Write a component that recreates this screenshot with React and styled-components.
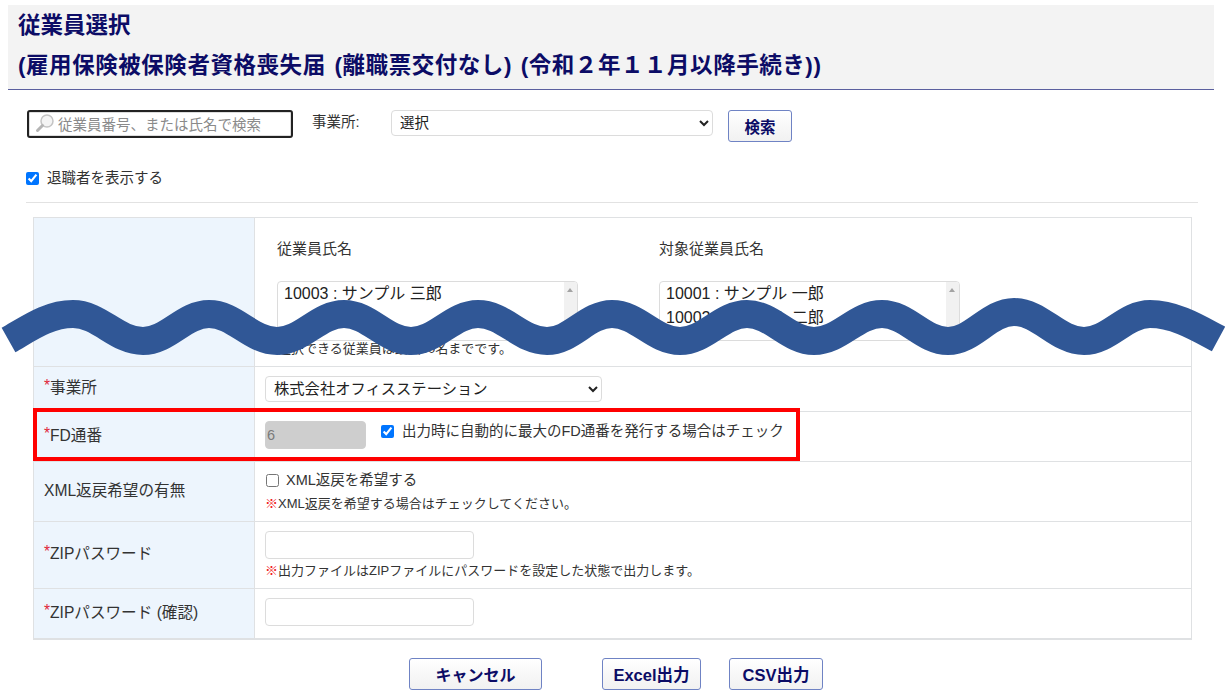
import React from "react";
import styled, { createGlobalStyle } from "styled-components";

const Global = createGlobalStyle`
  html, body { margin: 0; padding: 0; background: #fff; }
  body { font-family: "Liberation Sans", "Noto Sans CJK JP", sans-serif; font-size: 14.5px; color: #333; }
`;

const Page = styled.div`
  position: relative;
  width: 1225px;
  height: 700px;
  overflow: hidden;
  padding-top: 5px;
  box-sizing: border-box;
`;

const Header = styled.header`
  margin: 0 11px 0 8px;
  background: #f3f3f3;
  border-bottom: 1px solid #5a5f9e;
  padding: 8px 0 0 10px;
  height: 76px;
`;

const Title = styled.h1`
  margin: 0;
  font-size: 22.5px;
  line-height: 26px;
  font-weight: 700;
  color: #0c0c66;
  white-space: nowrap;
  letter-spacing: ${(p) => (p.$wide ? "0.55px" : "0")};
  word-spacing: ${(p) => (p.$wide ? "2px" : "0")};
  & + & { margin-top: 14px; }
`;

const Toolbar = styled.div`
  display: flex;
  align-items: flex-start;
  margin: 20px 0 0 27px;
`;

const SearchBox = styled.div`
  display: flex;
  align-items: center;
  gap: 3px;
  width: 266px;
  height: 28px;
  box-sizing: border-box;
  padding: 0 0 2px 6px;
  border: 2px solid #222;
  border-radius: 3px;
  background: #fff;
  box-shadow: inset 0 0 0 1px #ddd;
  color: #8a8a8a;
  white-space: nowrap;
`;

const ToolLabel = styled.span`
  margin: 2px 30px 0 19px;
  line-height: 20px;
  width: 49px;
  white-space: nowrap;
`;

const Select = styled.select`
  width: ${(p) => p.$width}px;
  height: ${(p) => p.$height}px;
  box-sizing: border-box;
  padding: 0 4px;
  border: 1px solid #dcdcdc;
  border-radius: 4px;
  background: #fff;
  color: #222;
  font: inherit;
  font-size: ${(p) => p.$fs}px;
`;

const Button = styled.button`
  width: ${(p) => p.$width}px;
  height: 32px;
  box-sizing: border-box;
  padding: 0;
  border: 1.5px solid #6f83c4;
  border-radius: 3px;
  background: linear-gradient(#ffffff, #f1f1f1);
  color: #0c0c66;
  font: inherit;
  font-size: ${(p) => p.$fs}px;
  font-weight: 700;
`;

const SearchButton = styled(Button)`
  margin-left: 15px;
`;

const RetiredRow = styled.label`
  display: flex;
  align-items: center;
  gap: 9px;
  margin: 24px 0 0 26px;
  height: 24px;
  line-height: 24px;
`;

const Check = styled.input.attrs({ type: "checkbox" })`
  width: 13px;
  height: 13px;
  margin: 0 -1px 0 0;
  flex: none;
  accent-color: #0075ff;
`;

const Rule = styled.hr`
  margin: 12px 27px 0 26px;
  border: 0;
  border-top: 1px solid #e2e2e2;
`;

const Table = styled.div`
  margin: 14px 33px 0 33px;
  width: 1159px;
  box-sizing: border-box;
  border: 1px solid #dfe1e3;
  border-bottom-width: 2px;
`;

const Row = styled.div`
  display: grid;
  grid-template-columns: 221px 1fr;
  min-height: ${(p) => p.$h}px;
  & + & { border-top: 1px solid #dfe1e3; }
`;

const Head = styled.div`
  display: flex;
  align-items: center;
  padding: 0 0 6px 10px;
  background: #edf5fd;
  border-right: 1px solid #dfe1e3;
  font-size: 15.6px;
`;

const Star = styled.span`
  color: #e0263a;
`;

const Cell = styled.div`
  display: flex;
  align-items: center;
  padding: 0 0 ${(p) => p.$pb || 0}px 10px;
`;

const ColCell = styled.div`
  display: flex;
  flex-direction: column;
  align-items: flex-start;
  justify-content: center;
  padding-left: 10px;
`;

const PickerCell = styled.div`
  display: flex;
  flex-direction: column;
`;

const Pickers = styled.div`
  display: flex;
  gap: 81px;
  padding: 21px 0 0 22px;
`;

const Picker = styled.div`
  width: 301px;
`;

const PickerLabel = styled.div`
  font-size: 15px;
  line-height: 20px;
  margin-bottom: 22px;
`;

const ListBox = styled.div`
  position: relative;
  height: 60px;
  box-sizing: border-box;
  padding: 0 6px;
  border: 1px solid #dcdcdc;
  border-radius: 4px;
  background: #fff;
  color: #222;
  font-size: 16px;
  line-height: 24px;
  overflow: hidden;
`;

const Track = styled.div`
  position: absolute;
  top: 0;
  right: 0;
  bottom: 0;
  width: 13px;
  background: #f1f1f1;
  &::before {
    content: "";
    position: absolute;
    top: 6px;
    left: 3px;
    border: 3.5px solid transparent;
    border-top: 0;
    border-bottom: 4px solid #a3a3a3;
  }
`;

const Note = styled.div`
  font-size: 13px;
  line-height: 18px;
  color: #333;
  margin-top: ${(p) => p.$mt || 0}px;
  white-space: nowrap;
`;

const PickerNote = styled(Note)`
  margin: -1px 0 0 10px;
`;

const Mark = styled.span`
  color: #f01414;
  font-weight: 700;
`;

const TextInput = styled.input`
  width: 209px;
  height: 28px;
  box-sizing: border-box;
  border: 1px solid #dcdcdc;
  border-radius: 4px;
  background: #fff;
  padding: 0 6px;
`;

const NumberInput = styled(TextInput)`
  width: 101px;
  background: #cecece;
  border-color: #cfcfcf;
  color: #7a7a7a;
  font: inherit;
  padding-left: 1px;
`;

const InlineCheck = styled.label`
  display: flex;
  align-items: center;
  gap: ${(p) => p.$gap}px;
  margin: 0 0 ${(p) => p.$mb || 0}px ${(p) => p.$ml || 0}px;
  line-height: 20px;
  color: #333;
  white-space: nowrap;
`;

const Actions = styled.div`
  display: flex;
  margin: 18px 0 0 409px;
`;

const ActionGap = styled.div`
  width: ${(p) => p.$w}px;
`;

const Highlight = styled.div`
  position: absolute;
  left: 33px;
  top: 408px;
  width: 767px;
  height: 53px;
  box-sizing: border-box;
  border: 4px solid #ff0000;
  pointer-events: none;
`;

const Wave = styled.svg`
  position: absolute;
  left: 0;
  top: 290px;
  pointer-events: none;
`;

const pts = [
  [73, 24], [143, 51], [209, 24], [277, 51], [344, 24], [411, 51], [478, 24], [547, 51],
  [612, 24], [680, 51], [747, 24], [814, 51], [882, 24], [948, 51], [1014, 22], [1084, 51], [1150, 24],
];
const waveD = pts.reduce((d, [x, y], i) => {
  if (i === 0) return `M8.5 50 C28 39 48 24 ${x} ${y}`;
  const [px, py] = pts[i - 1];
  const k = (x - px) * 0.38;
  return `${d} C${px + k} ${py} ${x - k} ${y} ${x} ${y}`;
}, "") + " C1175 24 1198 38 1218.5 49";

const SearchIcon = () => (
  <svg width="20" height="20" viewBox="0 0 20 20" fill="none">
    <circle cx="12" cy="8" r="6" fill="#f4f4f4" stroke="#c4c4c4" strokeWidth="1.5" />
    <path d="M7.5 12.5 L2.5 17.5" stroke="#b5b5b5" strokeWidth="3" strokeLinecap="round" />
  </svg>
);

export default function App() {
  return (
    <Page>
      <Global />
      <Header>
        <Title>従業員選択</Title>
        <Title $wide>(雇用保険被保険者資格喪失届 (離職票交付なし) (令和２年１１月以降手続き))</Title>
      </Header>
      <Toolbar>
        <SearchBox>
          <SearchIcon />
          <span>従業員番号、または氏名で検索</span>
        </SearchBox>
        <ToolLabel>事業所:</ToolLabel>
        <Select $width={322} $height={26} $fs={14.5} defaultValue="選択">
          <option>選択</option>
        </Select>
        <SearchButton $width={64} $fs={15.5}>検索</SearchButton>
      </Toolbar>
      <RetiredRow>
        <Check defaultChecked />
        退職者を表示する
      </RetiredRow>
      <Rule />
      <Table>
        <Row $h={148}>
          <Head />
          <PickerCell>
            <Pickers>
              <Picker>
                <PickerLabel>従業員氏名</PickerLabel>
                <ListBox>
                  10003 : サンプル 三郎
                  <Track />
                </ListBox>
              </Picker>
              <Picker>
                <PickerLabel>対象従業員氏名</PickerLabel>
                <ListBox>
                  10001 : サンプル 一郎
                  <br />
                  10002 : サンプル 二郎
                  <Track />
                </ListBox>
              </Picker>
            </Pickers>
            <PickerNote>
              <Mark>※</Mark>選択できる従業員は最大50名までです。
            </PickerNote>
          </PickerCell>
        </Row>
        <Row $h={44}>
          <Head><Star>*</Star>事業所</Head>
          <Cell $pb={1}>
            <Select $width={337} $height={26} $fs={15.3} defaultValue="株式会社オフィスステーション">
              <option>株式会社オフィスステーション</option>
            </Select>
          </Cell>
        </Row>
        <Row $h={49}>
          <Head><Star>*</Star>FD通番</Head>
          <Cell $pb={4}>
            <NumberInput disabled defaultValue="6" />
            <InlineCheck $gap={9} $ml={15} $mb={7}>
              <Check defaultChecked />
              出力時に自動的に最大のFD通番を発行する場合はチェック
            </InlineCheck>
          </Cell>
        </Row>
        <Row $h={59}>
          <Head>XML返戻希望の有無</Head>
          <ColCell>
            <InlineCheck $gap={8} $ml={1}>
              <Check />
              XML返戻を希望する
            </InlineCheck>
            <Note $mt={5}><Mark>※</Mark>XML返戻を希望する場合はチェックしてください。</Note>
          </ColCell>
        </Row>
        <Row $h={66}>
          <Head><Star>*</Star>ZIPパスワード</Head>
          <ColCell>
            <TextInput />
            <Note $mt={3}><Mark>※</Mark>出力ファイルはZIPファイルにパスワードを設定した状態で出力します。</Note>
          </ColCell>
        </Row>
        <Row $h={49}>
          <Head><Star>*</Star>ZIPパスワード (確認)</Head>
          <Cell $pb={4}>
            <TextInput />
          </Cell>
        </Row>
      </Table>
      <Actions>
        <Button $width={133} $fs={16}>キャンセル</Button>
        <ActionGap $w={60} />
        <Button $width={99} $fs={16.5}>Excel出力</Button>
        <ActionGap $w={28} />
        <Button $width={94} $fs={16.5}>CSV出力</Button>
      </Actions>
      <Highlight />
      <Wave width="1225" height="100" viewBox="0 0 1225 100">
        <path d={waveD} fill="none" stroke="#305796" strokeWidth="28" />
      </Wave>
    </Page>
  );
}
